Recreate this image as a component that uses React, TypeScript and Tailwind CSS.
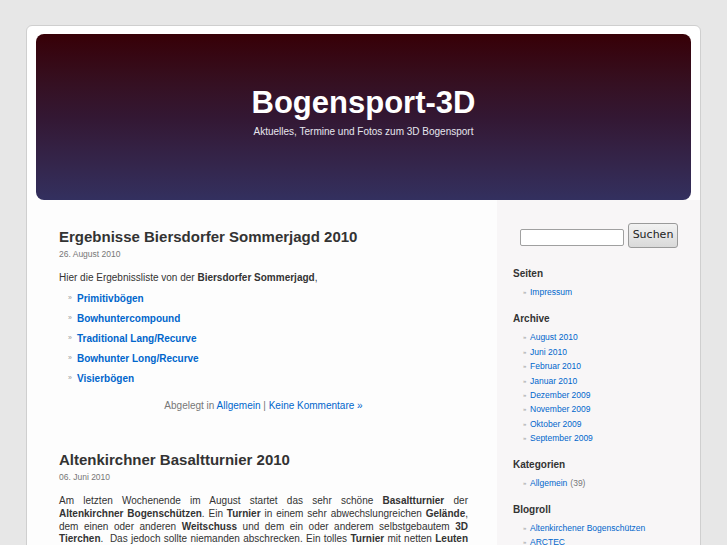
import React from 'react';

const sans = { fontFamily: '"Liberation Sans", Arial, sans-serif' };

const archive = [
  'August 2010',
  'Juni 2010',
  'Februar 2010',
  'Januar 2010',
  'Dezember 2009',
  'November 2009',
  'Oktober 2009',
  'September 2009',
];

const results = [
  'Primitivbögen',
  'Bowhuntercompound',
  'Traditional Lang/Recurve',
  'Bowhunter Long/Recurve',
  'Visierbögen',
];

function SideItem({ children }: { children: React.ReactNode }) {
  return (
    <li className="flex items-center h-[14.4px] text-[8.5px] leading-[14.4px]">
      <span className="text-[#999] text-[6px] w-[7px]">»</span>
      {children}
    </li>
  );
}

function SideHeading({ children }: { children: React.ReactNode }) {
  return <h2 className="text-[10px] leading-[12px] font-bold text-[#333] mb-[5px]">{children}</h2>;
}

export default function App() {
  return (
    <div className="min-h-[545px] bg-[#e7e7e7] pt-[25px] overflow-hidden" style={sans}>
      <div className="w-[675px] mx-auto bg-white border border-[#cfcfcf] rounded-t-[6px]">
        {/* HEADER */}
        <div className="px-[9px] pt-[8px]">
          <div className="h-[166px] rounded-[8px] bg-gradient-to-b from-[#370006] via-[#331733] to-[#33305f] flex flex-col items-center pt-[51px]">
            <h1 className="text-[31px] leading-[36px] font-bold text-white">Bogensport-3D</h1>
            <p className="text-[10px] leading-[12px] text-[#e6e6ee] mt-[5px]">
              Aktuelles, Termine und Fotos zum 3D Bogensport
            </p>
          </div>
        </div>

        <div className="flex">
          {/* CONTENT */}
          <div className="w-[470px] pl-[32px] pr-[29px] pt-[28px] bg-[#fdfdfd] text-[#333]">
            <h2 className="text-[15px] leading-[18px] font-bold text-[#333]">Ergebnisse Biersdorfer Sommerjagd 2010</h2>
            <div className="text-[8.5px] leading-[12px] text-[#777] mt-[2px]">26. August 2010</div>
            <p className="text-[10px] leading-[14px] mt-[11px]">
              Hier die Ergebnissliste von der <strong>Biersdorfer Sommerjagd</strong>,
            </p>
            <ul className="mt-[3px] pl-[9px]">
              {results.map((r) => (
                <li key={r} className="flex items-center h-[20px] text-[10px]">
                  <span className="text-[#999] text-[7px] w-[9px]">»</span>
                  <a className="font-bold text-[#0066cc]">{r}</a>
                </li>
              ))}
            </ul>
            <p className="text-[10px] leading-[14px] text-[#777] text-center mt-[11px]">
              Abgelegt in <a className="text-[#0066cc]">Allgemein</a> | <a className="text-[#0066cc]">Keine Kommentare »</a>
            </p>

            <h2 className="text-[15px] leading-[18px] font-bold text-[#333] mt-[38px]">Altenkirchner Basaltturnier 2010</h2>
            <div className="text-[8.5px] leading-[12px] text-[#777] mt-[2px]">06. Juni 2010</div>
            <p className="text-[10px] leading-[12.8px] mt-[12px] text-justify">
              Am letzten Wochenende im August startet das sehr schöne <strong>Basaltturnier</strong> der{' '}
              <strong>Altenkirchner Bogenschützen</strong>. Ein <strong>Turnier</strong> in einem sehr abwechslungreichen{' '}
              <strong>Gelände</strong>, dem einen oder anderen <strong>Weitschuss</strong> und dem ein oder anderem
              selbstgebautem <strong>3D Tierchen</strong>.&nbsp; Das jedoch sollte niemanden abschrecken. Ein tolles{' '}
              <strong>Turnier</strong> mit netten <strong>Leuten</strong> und einer super Verpflegung.
            </p>
          </div>

          {/* SIDEBAR */}
          <div className="flex-1 bg-[#f8f6f7] pl-[16px] pt-[23px]">
            <form className="flex items-start pl-[7px]" onSubmit={(e) => e.preventDefault()}>
              <input
                type="text"
                className="w-[104px] h-[17px] mt-[6px] border border-[#a0a0a0] rounded-[2px] bg-white"
              />
              <button
                type="button"
                className="ml-[4px] w-[50px] h-[25px] border border-[#9a9a9a] rounded-[3px] bg-gradient-to-b from-[#f2f2f2] to-[#d9d9d9] text-[11px] text-[#222]"
                style={{ fontFamily: '"DejaVu Sans", sans-serif' }}
              >
                Suchen
              </button>
            </form>

            <div className="mt-[20px]">
              <SideHeading>Seiten</SideHeading>
              <ul className="pl-[10px]">
                <SideItem><a className="text-[#0066cc]">Impressum</a></SideItem>
              </ul>
            </div>

            <div className="mt-[14px]">
              <SideHeading>Archive</SideHeading>
              <ul className="pl-[10px]">
                {archive.map((a) => (
                  <SideItem key={a}><a className="text-[#0066cc]">{a}</a></SideItem>
                ))}
              </ul>
            </div>

            <div className="mt-[13px]">
              <SideHeading>Kategorien</SideHeading>
              <ul className="pl-[10px]">
                <SideItem>
                  <a className="text-[#0066cc]">Allgemein</a>
                  <span className="text-[#777] ml-[3px]">(39)</span>
                </SideItem>
              </ul>
            </div>

            <div className="mt-[14px]">
              <SideHeading>Blogroll</SideHeading>
              <ul className="pl-[10px]">
                <SideItem><a className="text-[#0066cc]">Altenkirchener Bogenschützen</a></SideItem>
                <SideItem><a className="text-[#0066cc]">ARCTEC</a></SideItem>
                <SideItem><a className="text-[#0066cc]">Bogensport Extra</a></SideItem>
              </ul>
            </div>
          </div>
        </div>
      </div>
    </div>
  );
}
